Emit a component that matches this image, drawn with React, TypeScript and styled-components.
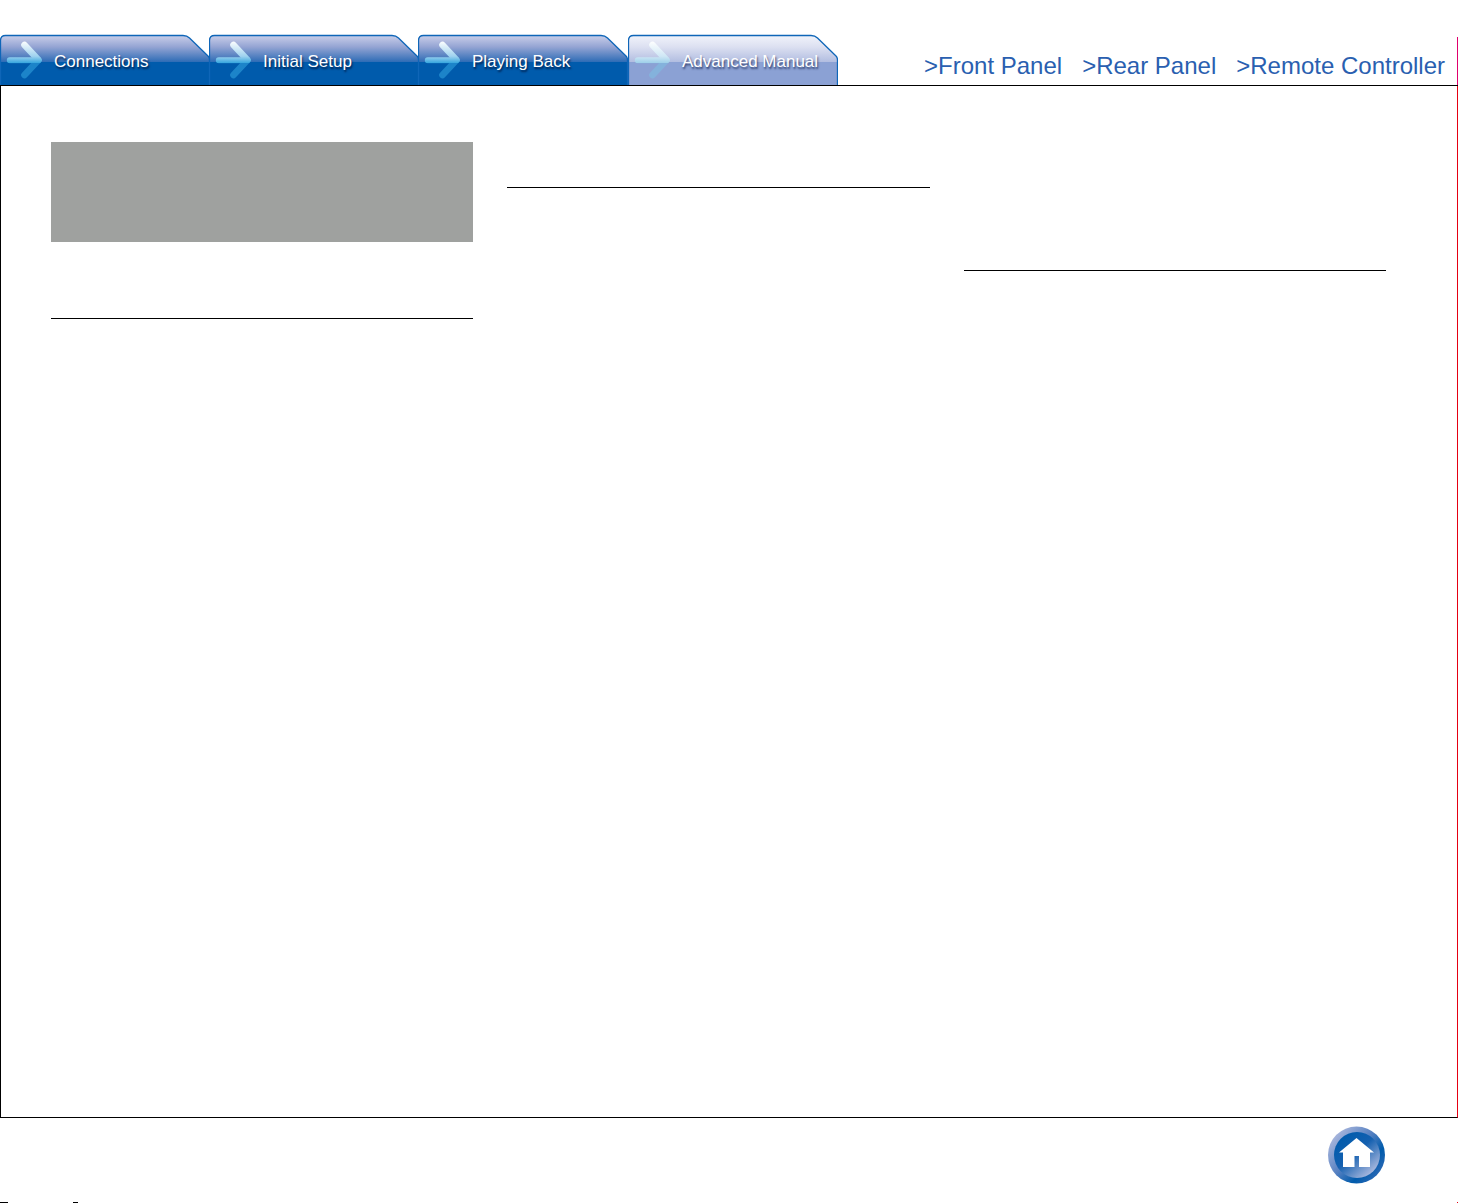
import React from 'react';
import styled, { createGlobalStyle } from 'styled-components';

const GlobalStyle = createGlobalStyle`
  *, *::before, *::after { box-sizing: border-box; }
  body {
    margin: 0;
    background: #fff;
    font-family: "Liberation Sans", Arial, Helvetica, sans-serif;
  }
`;

const Page = styled.div`
  min-height: 100vh;
  display: flex;
  flex-direction: column;
`;

const Header = styled.header`
  display: flex;
  justify-content: space-between;
  height: 86px;
  border-bottom: 1px solid #000;
`;

const Tabs = styled.nav`
  display: grid;
  grid-template-columns: 209px 209px 210px 210px;
  align-self: flex-end;
`;

const Tab = styled.a<{ $active?: boolean }>`
  display: grid;
  width: 210px;
  height: 51px;
  color: #fff;
  font-size: 17px;
  line-height: 20px;
  text-decoration: none;
  text-shadow: 1px 2px 2px ${p => (p.$active ? 'rgba(20, 35, 80, 0.75)' : 'rgba(0, 15, 50, 0.75)')};
`;

const TabShape = styled.svg`
  grid-area: 1 / 1;
  display: block;
  width: 210px;
  height: 51px;
`;

const TabLabel = styled.span`
  grid-area: 1 / 1;
  z-index: 1;
  padding: 18px 0 0 54px;
  white-space: nowrap;
`;

const Side = styled.div`
  display: flex;
  gap: 12px;
`;

const PanelLinks = styled.nav`
  display: flex;
  align-items: flex-end;
  gap: 20px;
  padding-bottom: 7px;
`;

const PanelLink = styled.a`
  color: #2a5fb0;
  font-size: 24px;
  line-height: 24px;
  text-decoration: none;
  white-space: nowrap;
`;

const EdgeLine = styled.span`
  width: 1px;
  margin-top: 37px;
  background: #e0006c;
`;

const Main = styled.main`
  flex: 1;
  display: grid;
  grid-template-columns: repeat(3, 1fr);
  column-gap: 34px;
  padding: 0 71px 0 50px;
  border: solid #000;
  border-width: 0 1px 1px;
  border-right-color: #e60012;
`;

const Column = styled.section<{ $top: number }>`
  padding-top: ${p => p.$top}px;
`;

const TitleBlock = styled.div`
  height: 100px;
  margin-bottom: 76px;
  background: #9fa19f;
`;

const Rule = styled.hr`
  height: 1px;
  margin: 0;
  border: 0;
  background: #000;
`;

const Footer = styled.footer`
  display: flex;
  flex-direction: column;
  justify-content: space-between;
  height: 85px;
  padding-top: 8px;
`;

const HomeLink = styled.a`
  align-self: flex-end;
  height: 58px;
  margin-right: 72px;
`;

const HomeIcon = styled.svg`
  display: block;
  width: 58px;
  height: 58px;
`;

const Marks = styled.div`
  display: flex;
  height: 1px;
`;

const Mark = styled.span<{ $width: number; $gap?: number }>`
  width: ${p => p.$width}px;
  margin-left: ${p => p.$gap ?? 0}px;
  background: #000;
`;

const EdgeMark = styled.span`
  width: 1px;
  margin-left: auto;
  background: #e60012;
`;

const tabs = [
  { label: 'Connections' },
  { label: 'Initial Setup' },
  { label: 'Playing Back' },
  { label: 'Advanced Manual', active: true },
];

const outline = 'M0.5 51V6.500Q0.5 1.500 5.500 1.500H183Q187 1.500 189.500 4L208 22Q209.500 23.500 209.500 26V51';

function TabGraphic({ active, id }: { active?: boolean; id: string }) {
  return (
    <TabShape viewBox="0 0 210 51" aria-hidden="true">
      <defs>
        <linearGradient id={`${id}-fill`} gradientUnits="userSpaceOnUse" x1="0" y1="1" x2="0" y2="51">
          <stop offset="0" stopColor={active ? '#f2f4fb' : '#ccd0ea'} />
          <stop offset="0.24" stopColor={active ? '#dce0f1' : '#94a4d3'} />
          <stop offset="0.55" stopColor={active ? '#b0bce0' : '#2a6ab5'} />
          <stop offset="0.55" stopColor={active ? '#8ba1d4' : '#005bac'} />
          <stop offset="1" stopColor={active ? '#8ba1d4' : '#005bac'} />
        </linearGradient>
        <linearGradient id={`${id}-arrow`} gradientUnits="userSpaceOnUse" x1="0" y1="7" x2="0" y2="45">
          <stop offset="0" stopColor="#ffffff" />
          <stop offset="0.4" stopColor={active ? '#cfe7f5' : '#9fd2ef'} />
          <stop offset="0.58" stopColor={active ? '#9dcfe9' : '#36a6de'} />
          <stop offset="0.58" stopColor={active ? '#84b2dc' : '#1c84c9'} />
          <stop offset="1" stopColor={active ? '#84b2dc' : '#1c84c9'} />
        </linearGradient>
      </defs>
      <path d={outline} fill={`url(#${id}-fill)`} stroke="#0f66b8" strokeWidth="1.3" />
      <g fill="none" stroke={`url(#${id}-arrow)`} strokeLinecap="round" strokeLinejoin="round">
        <path d="M24.500 11L38.500 26L24.500 41" strokeWidth="6.600" />
        <path d="M9.800 26.200L38 26.200L38.500 26" strokeWidth="6" />
      </g>
    </TabShape>
  );
}

export default function App() {
  return (
    <Page>
      <GlobalStyle />
      <Header>
        <Tabs aria-label="Manual sections">
          {tabs.map((tab, i) => (
            <Tab key={tab.label} href="#" $active={tab.active} aria-current={tab.active ? 'page' : undefined}>
              <TabGraphic active={tab.active} id={`tab${i}`} />
              <TabLabel>{tab.label}</TabLabel>
            </Tab>
          ))}
        </Tabs>
        <Side>
          <PanelLinks aria-label="Panels">
            <PanelLink href="#">&gt;Front Panel</PanelLink>
            <PanelLink href="#">&gt;Rear Panel</PanelLink>
            <PanelLink href="#">&gt;Remote Controller</PanelLink>
          </PanelLinks>
          <EdgeLine />
        </Side>
      </Header>
      <Main>
        <Column $top={56}>
          <TitleBlock />
          <Rule />
        </Column>
        <Column $top={101}>
          <Rule />
        </Column>
        <Column $top={184}>
          <Rule />
        </Column>
      </Main>
      <Footer>
        <HomeLink href="#" aria-label="Home">
          <HomeIcon viewBox="0 0 58 58" aria-hidden="true">
            <defs>
              <linearGradient id="home-ring" x1="0.1" y1="0.15" x2="0.9" y2="0.85">
                <stop offset="0" stopColor="#aab7dd" />
                <stop offset="0.45" stopColor="#5580c1" />
                <stop offset="0.75" stopColor="#005bac" />
                <stop offset="1" stopColor="#2b68b4" />
              </linearGradient>
              <linearGradient id="home-disc" x1="0.15" y1="0.1" x2="0.85" y2="0.9">
                <stop offset="0" stopColor="#005bac" />
                <stop offset="0.45" stopColor="#1460b0" />
                <stop offset="1" stopColor="#b0bce0" />
              </linearGradient>
            </defs>
            <circle cx="28.500" cy="29" r="28.500" fill="url(#home-ring)" />
            <circle cx="29" cy="29" r="23" fill="url(#home-disc)" />
            <path d="M28.500 12L46 26.500H42V41H31V30H26.500V41H15V26.500H11Z" fill="#fff" />
          </HomeIcon>
        </HomeLink>
        <Marks aria-hidden="true">
          <Mark $width={8} />
          <Mark $width={5} $gap={65} />
          <EdgeMark />
        </Marks>
      </Footer>
    </Page>
  );
}
